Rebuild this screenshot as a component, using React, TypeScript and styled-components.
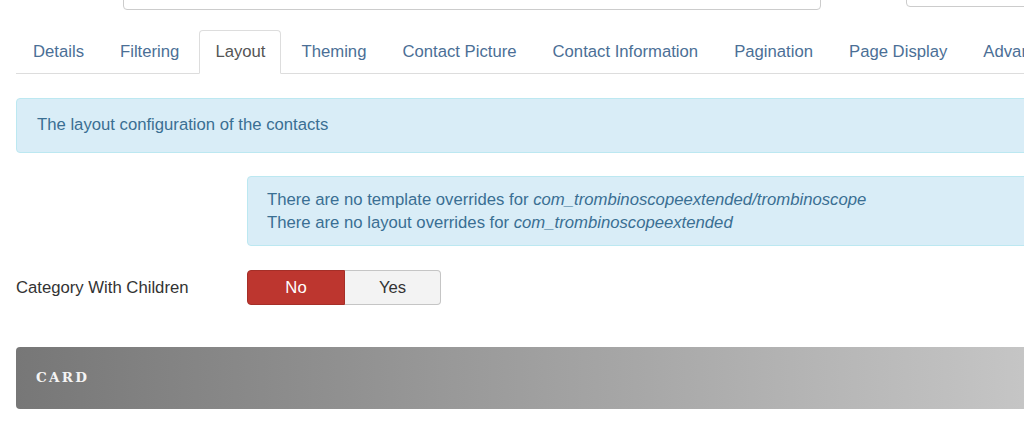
import React from 'react';
import styled, { createGlobalStyle } from 'styled-components';

const GlobalStyle = createGlobalStyle`
  html, body {
    margin: 0;
    padding: 0;
    background: #fff;
    overflow: hidden;
  }
  body {
    font-family: "Liberation Sans", Arial, sans-serif;
    font-size: 16.7px;
    color: #333;
  }
`;

const Page = styled.div`
  width: 1120px;
  padding: 0 0 0 16px;
  box-sizing: border-box;
`;

const InputRow = styled.div`
  display: flex;
  align-items: flex-end;
  height: 10px;
  margin-left: 107px;
`;

const FakeInput = styled.div<{ $width: number; $lift: number }>`
  width: ${p => p.$width}px;
  height: 30px;
  margin-bottom: ${p => p.$lift}px;
  border: 1px solid #ccc;
  border-radius: 4px;
  box-sizing: border-box;
  flex-shrink: 0;
`;

const InputGap = styled.div`
  width: 85px;
  flex-shrink: 0;
`;

const TabList = styled.ul`
  display: flex;
  list-style: none;
  margin: 20px 0 0;
  padding: 0 0 0 1px;
  border-bottom: 1px solid #ddd;
  white-space: nowrap;
`;

const Tab = styled.li<{ $active?: boolean }>`
  margin: 0 4px -1px 0;
  padding: 11px 15px;
  line-height: 20px;
  border: 1px solid ${p => (p.$active ? '#ddd' : 'transparent')};
  border-bottom-color: ${p => (p.$active ? '#fff' : 'transparent')};
  border-radius: 4px 4px 0 0;
  background: ${p => (p.$active ? '#fff' : 'transparent')};
  color: ${p => (p.$active ? '#555' : '#4b6f96')};
`;

const Alert = styled.div<{ $indent?: number }>`
  margin-left: ${p => p.$indent ?? 0}px;
  background: #d9edf7;
  border: 1px solid #bce8f1;
  border-radius: 4px;
  color: #3a6f93;
`;

const IntroAlert = styled(Alert)`
  margin-top: 24px;
  padding: 16px 20px 17px;
  line-height: 20px;
`;

const OverrideAlert = styled(Alert)`
  margin-top: 23px;
  padding: 11px 19px 11px;
  line-height: 23px;
`;

const Code = styled.em`
  font-style: italic;
`;

const FieldRow = styled.div`
  display: flex;
  align-items: center;
  margin-top: 24px;
  height: 35px;
`;

const FieldLabel = styled.div`
  width: 231px;
  color: #333;
`;

const Toggle = styled.div`
  display: flex;
  height: 35px;
`;

const ToggleButton = styled.div<{ $on?: boolean; $pos: 'first' | 'last' }>`
  display: flex;
  align-items: center;
  justify-content: center;
  width: ${p => (p.$pos === 'first' ? 98 : 96)}px;
  box-sizing: border-box;
  border: 1px solid ${p => (p.$on ? '#a52f28' : '#c5c5c5')};
  border-left-width: ${p => (p.$pos === 'last' ? 0 : 1)}px;
  border-radius: ${p => (p.$pos === 'first' ? '4px 0 0 4px' : '0 4px 4px 0')};
  background: ${p => (p.$on ? '#bd362f' : '#f3f3f3')};
  color: ${p => (p.$on ? '#fff' : '#333')};
`;

const Card = styled.div`
  margin-top: 42px;
  height: 62px;
  display: flex;
  align-items: center;
  padding: 0 0 3px 20px;
  box-sizing: border-box;
  border-radius: 4px;
  background: linear-gradient(to right, #777 0%, #c4c4c4 90%, #cdcdcd 100%);
`;

const CardTitle = styled.span`
  font-family: "DejaVu Serif", "Liberation Serif", serif;
  font-weight: bold;
  font-size: 13.5px;
  letter-spacing: 2.3px;
  color: #f4f4f4;
`;

const tabs = [
  'Details',
  'Filtering',
  'Layout',
  'Theming',
  'Contact Picture',
  'Contact Information',
  'Pagination',
  'Page Display',
  'Advanced',
];

export default function App() {
  return (
    <Page>
      <GlobalStyle />
      <InputRow>
        <FakeInput $width={698} $lift={0} />
        <InputGap />
        <FakeInput $width={200} $lift={3} />
      </InputRow>
      <TabList>
        {tabs.map(t => (
          <Tab key={t} $active={t === 'Layout'}>
            {t}
          </Tab>
        ))}
      </TabList>
      <IntroAlert>The layout configuration of the contacts</IntroAlert>
      <OverrideAlert $indent={231}>
        There are no template overrides for <Code>com_trombinoscopeextended/trombinoscope</Code>
        <br />
        There are no layout overrides for <Code>com_trombinoscopeextended</Code>
      </OverrideAlert>
      <FieldRow>
        <FieldLabel>Category With Children</FieldLabel>
        <Toggle>
          <ToggleButton $on $pos="first">No</ToggleButton>
          <ToggleButton $pos="last">Yes</ToggleButton>
        </Toggle>
      </FieldRow>
      <Card>
        <CardTitle>CARD</CardTitle>
      </Card>
    </Page>
  );
}
